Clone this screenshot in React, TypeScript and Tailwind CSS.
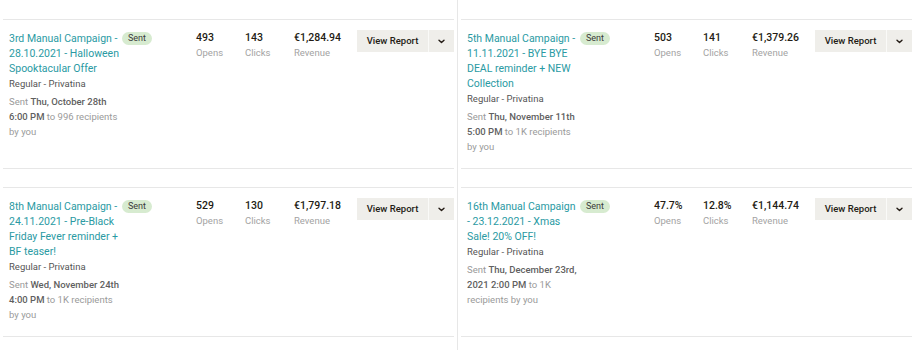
import React from "react";

type Campaign = {
  title: string;
  when: string;
  recipients: string;
  opens: string;
  clicks: string;
  revenue: string;
};

const left: Campaign[] = [
  {
    title: "3rd Manual Campaign - 28.10.2021 - Halloween Spooktacular Offer",
    when: "Thu, October 28th 6:00 PM",
    recipients: "996",
    opens: "493",
    clicks: "143",
    revenue: "€1,284.94",
  },
  {
    title: "8th Manual Campaign - 24.11.2021 - Pre-Black Friday Fever reminder + BF teaser!",
    when: "Wed, November 24th 4:00 PM",
    recipients: "1K",
    opens: "529",
    clicks: "130",
    revenue: "€1,797.18",
  },
];

const right: Campaign[] = [
  {
    title: "5th Manual Campaign - 11.11.2021 - BYE BYE DEAL reminder + NEW Collection",
    when: "Thu, November 11th 5:00 PM",
    recipients: "1K",
    opens: "503",
    clicks: "141",
    revenue: "€1,379.26",
  },
  {
    title: "16th Manual Campaign - 23.12.2021 - Xmas Sale! 20% OFF!",
    when: "Thu, December 23rd, 2021 2:00 PM",
    recipients: "1K",
    opens: "47.7%",
    clicks: "12.8%",
    revenue: "€1,144.74",
  },
];

function Stat({ value, label, w }: { value: string; label: string; w: string }) {
  return (
    <div className={`${w} shrink-0 flex flex-col`}>
      <div className="text-[10.5px] leading-[14px] font-medium text-[#241c15]">{value}</div>
      <div className="text-[9.5px] leading-[14px] text-[#a3a3a3] mt-px">{label}</div>
    </div>
  );
}

function Row({ c }: { c: Campaign }) {
  return (
    <div className="h-[150px] border-y border-[#e7e7e7] pl-[6px] pt-[11px] flex items-start">
      <div className="w-[187px] shrink-0 flex items-start">
        <div className="w-[112px] shrink-0">
          <div className="text-[10.5px] leading-[15px] text-[#2a9aa3]">{c.title}</div>
          <div className="text-[9.5px] leading-[15px] text-[#555555]">Regular - Privatina</div>
          <div className="mt-[3px] text-[9.5px] leading-[15px] text-[#9a9a9a]">
            Sent <span className="font-medium text-[#5f5f5f]">{c.when}</span> to {c.recipients} recipients by you
          </div>
        </div>
        <span className="ml-[1px] mt-px h-[13px] px-[6px] rounded-full bg-[#d7ebd0] text-[9px] leading-[13px] text-[#3a3a3a]">
          Sent
        </span>
      </div>
      <Stat value={c.opens} label="Opens" w="w-[49px]" />
      <Stat value={c.clicks} label="Clicks" w="w-[49px]" />
      <Stat value={c.revenue} label="Revenue" w="w-[63px]" />
      <div className="-mt-px flex h-[22px] shrink-0">
        <button className="w-[71px] h-full bg-[#efeeea] text-[9.5px] font-medium text-[#241c15] flex items-center justify-center">
          View Report
        </button>
        <div className="w-px h-full bg-[#fafaf8]" />
        <button className="w-[25px] h-full bg-[#efeeea] flex items-center justify-center">
          <svg width="7" height="5" viewBox="0 0 7 5" fill="none">
            <path d="M1 1.2 L3.5 3.6 L6 1.2" stroke="#241c15" strokeWidth="1.4" strokeLinecap="round" strokeLinejoin="round" />
          </svg>
        </button>
      </div>
    </div>
  );
}

function Column({ items }: { items: Campaign[] }) {
  return (
    <div className="w-[451px] shrink-0 pt-[19px] flex flex-col gap-[18px]">
      {items.map((c) => (
        <Row key={c.title} c={c} />
      ))}
    </div>
  );
}

export default function App() {
  return (
    <div
      className="w-[916px] h-[350px] bg-white flex pl-[3px] overflow-hidden"
      style={{ fontFamily: "Roboto, 'Noto Sans', sans-serif" }}
    >
      <Column items={left} />
      <div className="ml-[3px] w-px h-full bg-[#e7e7e7] shrink-0" />
      <div className="ml-[3px]">
        <Column items={right} />
      </div>
    </div>
  );
}
